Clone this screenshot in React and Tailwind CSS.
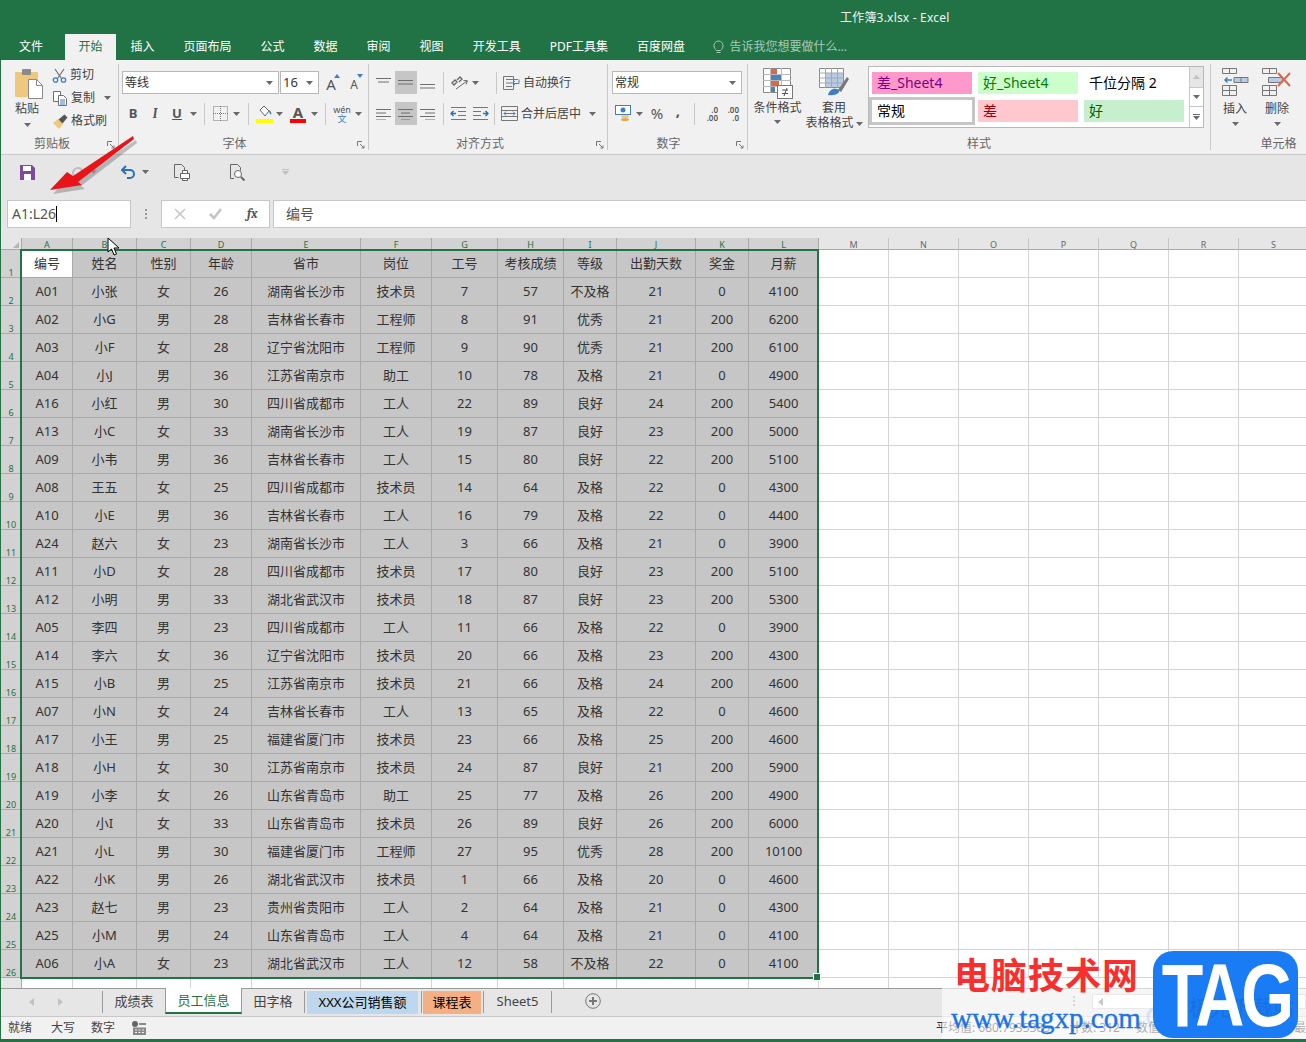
import React from 'react';

const cols = ['A', 'B', 'C', 'D', 'E', 'F', 'G', 'H', 'I', 'J', 'K', 'L', 'M', 'N', 'O', 'P', 'Q', 'R', 'S'];
const head = ['编号', '姓名', '性别', '年龄', '省市', '岗位', '工号', '考核成绩', '等级', '出勤天数', '奖金', '月薪'];
const rows = [
  'A01 小张 女 26 湖南省长沙市 技术员 7 57 不及格 21 0 4100',
  'A02 小G 男 28 吉林省长春市 工程师 8 91 优秀 21 200 6200',
  'A03 小F 女 28 辽宁省沈阳市 工程师 9 90 优秀 21 200 6100',
  'A04 小J 男 36 江苏省南京市 助工 10 78 及格 21 0 4900',
  'A16 小红 男 30 四川省成都市 工人 22 89 良好 24 200 5400',
  'A13 小C 女 33 湖南省长沙市 工人 19 87 良好 23 200 5000',
  'A09 小韦 男 36 吉林省长春市 工人 15 80 良好 22 200 5100',
  'A08 王五 女 25 四川省成都市 技术员 14 64 及格 22 0 4300',
  'A10 小E 男 36 吉林省长春市 工人 16 79 及格 22 0 4400',
  'A24 赵六 女 23 湖南省长沙市 工人 3 66 及格 21 0 3900',
  'A11 小D 女 28 四川省成都市 技术员 17 80 良好 23 200 5100',
  'A12 小明 男 33 湖北省武汉市 技术员 18 87 良好 23 200 5300',
  'A05 李四 男 23 四川省成都市 工人 11 66 及格 22 0 3900',
  'A14 李六 女 36 辽宁省沈阳市 技术员 20 66 及格 23 200 4300',
  'A15 小B 男 25 江苏省南京市 技术员 21 66 及格 24 200 4600',
  'A07 小N 女 24 吉林省长春市 工人 13 65 及格 22 0 4600',
  'A17 小王 男 25 福建省厦门市 技术员 23 66 及格 25 200 4600',
  'A18 小H 女 30 江苏省南京市 技术员 24 87 良好 21 200 5900',
  'A19 小李 女 26 山东省青岛市 助工 25 77 及格 26 200 4900',
  'A20 小I 女 33 山东省青岛市 技术员 26 89 良好 26 200 6000',
  'A21 小L 男 30 福建省厦门市 工程师 27 95 优秀 28 200 10100',
  'A22 小K 男 26 湖北省武汉市 技术员 1 66 及格 20 0 4600',
  'A23 赵七 男 23 贵州省贵阳市 工人 2 64 及格 21 0 4300',
  'A25 小M 男 24 山东省青岛市 工人 4 64 及格 21 0 4100',
  'A06 小A 女 23 湖北省武汉市 工人 12 58 不及格 22 0 4100',
].map((r) => r.split(' '));

const tabs = ['插入', '页面布局', '公式', '数据', '审阅', '视图', '开发工具', 'PDF工具集', '百度网盘'];
const gridCols = 'grid grid-cols-[21px_51px_64px_54px_61px_109px_71px_66px_66px_53px_79px_53px_70px_70px_70px_70px_70px_70px_70px_70px]';

const Caret = ({ className = '' }) => (
  <svg width="7" height="4" viewBox="0 0 7 4" className={`shrink-0 ${className}`}><path d="M0 0h7L3.5 4z" fill="#6a6a6a" /></svg>
);

const Launcher = () => (
  <svg width="8" height="8" viewBox="0 0 8 8" className="absolute right-[3px] bottom-[1px]" fill="none" stroke="#777">
    <path d="M.5 5V.5H5M3 3l4 4M7 4.5V7H4.5" />
  </svg>
);

const Lines = ({ widths, y = 0 }) => (
  <svg width="16" height="12" viewBox="0 0 16 12" stroke="#6e6e6e">
    {widths.map(([x1, x2], i) => <path key={i} d={`M${x1} ${y + 1.5 + i * 3.5}H${x2}`} />)}
  </svg>
);

const Group = ({ w, label, labelCls = '', launcher, children, border = true }) => (
  <div className={`relative flex flex-col shrink-0 h-[86px] ${w} ${border ? 'border-r border-[#c8c8c8]' : ''}`}>
    <div className="h-[74px] shrink-0">{children}</div>
    <div className={`text-center text-[12px] leading-[12px] text-[#666] ${labelCls}`}>{label}</div>
    {launcher && <Launcher />}
  </div>
);

const Sep = ({ className = '' }) => <div className={`w-px h-[22px] bg-[#c8c8c8] shrink-0 ${className}`} />;

const Select = ({ w, text, size = 'text-[12px]' }) => (
  <div className={`${w} h-[23px] shrink-0 bg-white border border-[#b8b8b8] flex items-center justify-between pl-[2px] pr-[5px] text-[#333] ${size}`}>
    <span>{text}</span>
    <Caret />
  </div>
);

const PasteIcon = () => (
  <svg width="30" height="31" viewBox="0 0 30 31" className="ml-[4px]">
    <rect x="1" y="4" width="23" height="25" rx="1" fill="#edc87e" />
    <rect x="8" y="1" width="9" height="6" rx="1" fill="#8a8a8a" />
    <path d="M14.5 11.5h8l6 6v13h-14z" fill="#fff" stroke="#8a8a8a" />
    <path d="M22.5 11.5v6h6" fill="none" stroke="#8a8a8a" />
  </svg>
);

const Scissors = () => (
  <svg width="15" height="15" viewBox="0 0 15 15" fill="none" strokeWidth="1.3">
    <circle cx="3.5" cy="12" r="2.2" stroke="#3f7fbf" />
    <circle cx="11.5" cy="12" r="2.2" stroke="#3f7fbf" />
    <path d="M3 1l6.5 9.5M12 1L5.5 10.5" stroke="#777" />
  </svg>
);

const CopyIcon = () => (
  <svg width="16" height="15" viewBox="0 0 16 15" fill="#fff" stroke="#6f6f6f">
    <path d="M1.5.5h7v10h-7z" />
    <path d="M6.5 4.5h5l3 3v7h-8z" />
    <path d="M8 9h5M8 11h5M8 13h5" stroke="#3f7fbf" />
  </svg>
);

const BrushIcon = () => (
  <svg width="16" height="15" viewBox="0 0 16 15">
    <path d="M1 9l5-4 5 5-4 5z" fill="#edc87e" />
    <path d="M6.5 5.5l6-5 3 3-5 6z" fill="#555" />
  </svg>
);

const GrowA = ({ up }) => (
  <div className="relative w-[20px] h-[20px] flex items-end justify-center text-[#555]">
    <span className={up ? 'text-[15px] leading-[18px]' : 'text-[12px] leading-[16px]'}>A</span>
    <svg width="6" height="4" viewBox="0 0 6 4" className="absolute right-[1px] top-[1px]">
      <path d={up ? 'M0 4h6L3 0z' : 'M0 0h6L3 4z'} fill="#3f7fbf" />
    </svg>
  </div>
);

const BorderIcon = () => (
  <svg width="15" height="15" viewBox="0 0 15 15" stroke="#777" fill="none" strokeDasharray="1 1">
    <path d="M.5.5h14v14H.5zM7.5 0v15M0 7.5h15" />
  </svg>
);

const FillIcon = () => (
  <svg width="17" height="19" viewBox="0 0 17 19">
    <path d="M4 6l4-4 5 5-4 5z" fill="#fff" stroke="#666" />
    <path d="M13 6c2 1 3 3 2 5-1-1-2-3-2-5z" fill="#3f7fbf" />
    <rect y="15" width="17" height="4" fill="#ffff00" />
  </svg>
);

const WrapIcon = () => (
  <svg width="17" height="16" viewBox="0 0 17 16" fill="none">
    <path d="M.5 1.5h10v13H.5z" stroke="#777" />
    <path d="M3 4.5h12M3 8h6M3 11.5h6" stroke="#777" />
    <path d="M16 4.5v4h-6M12 6l-2.500 2 2.500 2" stroke="#3f7fbf" />
  </svg>
);

const MergeIcon = () => (
  <svg width="17" height="15" viewBox="0 0 17 15" fill="none">
    <path d="M.5.5h16v14H.5zM.5 4.500h16M.5 10.500h16" stroke="#777" />
    <path d="M3 7.500h11M5 5.500l-2 2 2 2M12 5.500l2 2-2 2" stroke="#3f7fbf" />
  </svg>
);

const IndentIcon = ({ flip }) => (
  <svg width="17" height="13" viewBox="0 0 17 13" fill="none" className={flip ? '-scale-x-100' : ''}>
    <path d="M1 .5h15M8 4.500h8M8 8.500h8M1 12.500h15" stroke="#777" />
    <path d="M6 6.500H1M3.500 4L1 6.500 3.500 9" stroke="#2f6fb5" strokeWidth="1.500" />
  </svg>
);

const OrientIcon = () => (
  <svg width="18" height="16" viewBox="0 0 18 16" fill="none" stroke="#666">
    <path d="M1 8l3-3 2 2-3 3zM6 5l3-3 2 2-3 3" strokeWidth="1.300" />
    <path d="M5 14L16 6M12.500 5.500L16.500 5.800 15 9.500" />
  </svg>
);

const CurrencyIcon = () => (
  <svg width="17" height="17" viewBox="0 0 17 17">
    <rect x=".5" y=".5" width="15" height="9" fill="#fff" stroke="#3f7fbf" />
    <circle cx="8" cy="5" r="2.500" fill="#3f7fbf" />
    <ellipse cx="10" cy="11.500" rx="4" ry="1.500" fill="#edc87e" />
    <ellipse cx="10" cy="14.500" rx="4" ry="1.500" fill="#e0a94f" />
  </svg>
);

const CondIcon = () => (
  <svg width="30" height="31" viewBox="0 0 30 31" fill="none">
    <path d="M.5.5h27v24H.5z" fill="#fff" stroke="#8a8a8a" />
    <path d="M7.500 0v25M18.500 0v25M0 6.500h28M0 12.500h28M0 18.500h28" stroke="#b8b8b8" />
    <rect x="8" y="1" width="6" height="5" fill="#d9694b" />
    <rect x="8" y="7" width="10" height="5" fill="#4a82bd" />
    <rect x="8" y="13" width="8" height="5" fill="#d9694b" />
    <rect x="8" y="19" width="4" height="5" fill="#4a82bd" />
    <rect x="14.500" y="17.500" width="15" height="13" fill="#fff" stroke="#777" />
    <path d="M19 22h6M19 25.500h6M24 20l-3 8" stroke="#555" />
  </svg>
);

const TableIcon = () => (
  <svg width="30" height="31" viewBox="0 0 30 31" fill="none">
    <path d="M.5.5h24v19H.5z" fill="#fff" stroke="#8a8a8a" />
    <rect x="7" y="5" width="17" height="14" fill="#b7cbe6" />
    <path d="M6.500 0v20M12.500 0v20M18.500 0v20M0 5h25M0 10h25M0 15h25" stroke="#a8a8a8" />
    <path d="M19 22l9-13 2 2-8 13z" fill="#777" />
    <path d="M9 27c1-5 6-8 11-5 1 3-3 6-11 5z" fill="#3f7fbf" />
  </svg>
);

const InsertIcon = () => (
  <svg width="27" height="28" viewBox="0 0 27 28" fill="none" stroke="#777">
    <path d="M.5.5h14v5H.5zM7.500 0v6" />
    <path d="M12 9.500h14v5H12zM19 9v6" fill="#b7cbe6" />
    <path d="M.5 17.500h14v10H.5zM7.500 17v11M0 22.500h15" />
    <path d="M10 12H3M5.500 9.500L3 12l2.500 2.500" stroke="#3f7fbf" strokeWidth="1.500" />
  </svg>
);

const DeleteIcon = () => (
  <svg width="30" height="28" viewBox="0 0 30 28" fill="none" stroke="#777">
    <path d="M.5.500h14v5H.5zM7.500 0v6" />
    <path d="M6.500 9.500h14v5h-14z" fill="#b7cbe6" />
    <path d="M.5 17.500h14v10H.5zM7.500 17v11M0 22.500h15" />
    <path d="M16 5l12 13M28 5L16 18" stroke="#d9694b" strokeWidth="2" />
  </svg>
);

const Style = ({ cls, children }) => (
  <div className={`w-[100px] h-[22px] flex items-center pl-[5px] pb-px text-[14px] ${cls}`}>{children}</div>
);

function Ribbon() {
  return (
    <div className="flex h-[94px] bg-[#f1f1f1] pt-[4px] pl-[5px]">
      <Group w="w-[113px]" label="剪贴板" labelCls="pr-[20px]" launcher>
        <div className="flex">
          <div className="w-[42px] flex flex-col items-center pt-[4px] text-[12px] text-[#444]">
            <PasteIcon />
            <span className="leading-[16px] mt-[2px]">粘贴</span>
            <Caret className="mt-[6px]" />
          </div>
          <div className="flex flex-col gap-[7px] pt-[3px] pl-[4px] text-[12px] text-[#444] leading-[16px]">
            <div className="flex items-center gap-[3px]"><Scissors />剪切</div>
            <div className="flex items-center gap-[3px]"><CopyIcon />复制<Caret className="ml-[6px]" /></div>
            <div className="flex items-center gap-[3px]"><BrushIcon />格式刷</div>
          </div>
        </div>
      </Group>
      <Group w="w-[250px]" label="字体" labelCls="pr-[18px]" launcher>
        <div className="pl-[3px] pt-[7px]">
          <div className="flex items-center">
            <Select w="w-[157px]" text="等线" />
            <Select w="w-[39px] ml-px" text="16" size="text-[13px]" />
            <div className="ml-[2px] flex gap-[3px]"><GrowA up /><GrowA /></div>
          </div>
          <div className="flex items-center h-[23px] mt-[8px] text-[13px] text-[#555]">
            <span className="w-[20px] shrink-0 ml-[1px] text-center font-bold">B</span>
            <span className="w-[24px] shrink-0 text-center italic font-serif font-bold">I</span>
            <span className="w-[20px] shrink-0 text-center font-bold underline">U</span>
            <Caret className="ml-[3px]" />
            <Sep className="ml-[7px]" />
            <div className="ml-[8px]"><BorderIcon /></div>
            <Caret className="ml-[5px]" />
            <Sep className="ml-[8px]" />
            <div className="ml-[7px]"><FillIcon /></div>
            <Caret className="ml-[3px]" />
            <div className="ml-[7px] w-[16px] flex flex-col items-center leading-[14px] font-bold text-[15px]">
              <span>A</span><span className="w-[16px] h-[4px] bg-[#ff0000]" />
            </div>
            <Caret className="ml-[5px]" />
            <Sep className="ml-[7px]" />
            <div className="ml-[8px] w-[16px] flex flex-col items-center text-[9px] leading-[9px]">
              <span>wén</span><span className="text-[#3f7fbf]">文</span>
            </div>
            <Caret className="ml-[5px]" />
          </div>
        </div>
      </Group>
      <Group w="w-[239px]" label="对齐方式" labelCls="pr-[16px]" launcher>
        <div className="pl-[4px] pt-[7px]">
          <div className="flex items-center h-[23px]">
            <div className="w-[22px] flex justify-center"><Lines widths={[[0, 15], [2, 13]]} /></div>
            <div className="w-[22px] h-[23px] bg-[#c6c6c6] flex justify-center items-center"><Lines widths={[[0, 15], [0, 15]]} y={2} /></div>
            <div className="w-[22px] flex justify-center pt-[6px]"><Lines widths={[[0, 15], [0, 15]]} y={3} /></div>
            <Sep className="ml-[4px]" />
            <div className="ml-[7px]"><OrientIcon /></div>
            <Caret className="ml-[3px]" />
            <Sep className="ml-[17px]" />
            <div className="ml-[6px] flex items-center gap-[3px] text-[12px] text-[#444]"><WrapIcon />自动换行</div>
          </div>
          <div className="flex items-center h-[23px] mt-[8px]">
            <div className="w-[22px] flex justify-center"><Lines widths={[[0, 15], [0, 10], [0, 15], [0, 10]]} /></div>
            <div className="w-[22px] h-[23px] bg-[#c6c6c6] flex justify-center items-center"><Lines widths={[[0, 15], [3, 12], [0, 15], [3, 12]]} /></div>
            <div className="w-[22px] flex justify-center"><Lines widths={[[0, 15], [5, 15], [0, 15], [5, 15]]} /></div>
            <Sep className="ml-[4px]" />
            <div className="ml-[6px]"><IndentIcon /></div>
            <div className="ml-[5px]"><IndentIcon flip /></div>
            <Sep className="ml-[5px]" />
            <div className="ml-[6px] flex items-center gap-[3px] text-[12px] text-[#444]"><MergeIcon />合并后居中</div>
            <Caret className="ml-[8px]" />
          </div>
        </div>
      </Group>
      <Group w="w-[140px]" label="数字" labelCls="pr-[18px]" launcher>
        <div className="pl-[4px] pt-[7px]">
          <Select w="w-[130px]" text="常规" />
          <div className="flex items-center h-[23px] mt-[8px] text-[#555]">
            <div className="ml-[3px]"><CurrencyIcon /></div>
            <Caret className="ml-[4px]" />
            <span className="ml-[5px] w-[18px] text-center text-[15px]">%</span>
            <span className="ml-[3px] -mt-[8px] w-[18px] text-center font-bold text-[15px] leading-[14px]">,</span>
            <Sep className="ml-[7px]" />
            <div className="ml-[9px] w-[14px] text-[8px] leading-[8px] text-right font-semibold">.0<br />.00</div>
            <div className="ml-[7px] w-[14px] text-[8px] leading-[8px] text-right font-semibold">.00<br />.0</div>
          </div>
        </div>
      </Group>
      <Group w="w-[463px]" label="样式">
        <div className="flex">
          <div className="w-[59px] flex flex-col items-center pt-[4px] text-[12px] text-[#444] leading-[15px]">
            <CondIcon />
            <span className="mt-[1px]">条件格式</span>
            <Caret className="mt-[5px]" />
          </div>
          <div className="w-[54px] flex flex-col items-center pt-[4px] text-[12px] text-[#444] leading-[15px]">
            <TableIcon />
            <span className="mt-[1px]">套用</span>
            <span className="whitespace-nowrap">表格格式<Caret className="inline ml-[2px] align-middle" /></span>
          </div>
          <div className="ml-[7px] mt-[2px] w-[336px] h-[62px] bg-white border border-[#b8b8b8] flex">
            <div className="flex-1 flex flex-col">
              <div className="flex gap-[6px] pl-[3px] pt-[5px]">
                <Style cls="bg-[#ff99cc] text-[#800080]">差_Sheet4</Style>
                <Style cls="bg-[#ccffcc] text-[#008000]">好_Sheet4</Style>
                <Style cls="text-black">千位分隔 2</Style>
              </div>
              <div className="flex gap-[6px] pl-[3px] pt-[6px]">
                <div className="w-[106px] h-[28px] -ml-[3px] -mt-[3px] -mr-[3px] border-[3px] border-[#c6c6c6] flex items-center pl-[5px] pb-px text-[14px]">常规</div>
                <Style cls="bg-[#ffc7ce] text-[#9c0006]">差</Style>
                <Style cls="bg-[#c6efce] text-[#006100]">好</Style>
              </div>
            </div>
            <div className="w-[14px] border-l border-[#c8c8c8] flex flex-col items-center">
              <div className="h-[21px] w-full bg-[#e6e6e6] flex items-center justify-center border-b border-[#c8c8c8]"><svg width="7" height="4" viewBox="0 0 7 4"><path d="M0 4h7L3.500 0z" fill="#c0c0c0" /></svg></div>
              <div className="h-[19px] w-full flex items-center justify-center border-b border-[#c8c8c8]"><Caret /></div>
              <div className="flex-1 flex flex-col items-center justify-center gap-px"><span className="w-[7px] h-px bg-[#6a6a6a]" /><Caret /></div>
            </div>
          </div>
        </div>
      </Group>
      <Group w="w-[95px]" label="单元格" labelCls="pl-[40px] whitespace-nowrap" border={false}>
        <div className="flex pl-[3px]">
          <div className="w-[42px] flex flex-col items-center pt-[4px] text-[12px] text-[#444] leading-[15px]">
            <InsertIcon />
            <span className="mt-[5px]">插入</span>
            <Caret className="mt-[6px]" />
          </div>
          <div className="w-[42px] flex flex-col items-center pt-[4px] text-[12px] text-[#444] leading-[15px]">
            <DeleteIcon />
            <span className="mt-[5px]">删除</span>
            <Caret className="mt-[6px]" />
          </div>
        </div>
      </Group>
    </div>
  );
}

function QuickBar() {
  return (
    <div className="h-[46px] bg-[#e6e6e6] border-t border-[#c8c8c8] flex items-center pl-[19px] pb-[11px]">
      <svg width="15" height="15" viewBox="0 0 15 15">
        <path d="M0 0h12l3 3v12H0z" fill="#7f4a9e" />
        <rect x="3" y="1" width="8" height="5" fill="#fff" />
        <rect x="4" y="9" width="7" height="6" fill="#fff" />
      </svg>
      <svg width="18" height="15" viewBox="0 0 18 15" fill="none" stroke="#bdbdbd" strokeWidth="2" className="ml-[34px]">
        <path d="M14 8a5 5 0 1 0-2 4M16 3v5h-5" />
      </svg>
      <Caret className="ml-[3px] opacity-40" />
      <svg width="15" height="14" viewBox="0 0 15 14" fill="none" stroke="#2f6fb5" strokeWidth="2" className="ml-[24px]">
        <path d="M1 5h8a4 4 0 0 1 0 8H6M5 1L1 5l4 4" />
      </svg>
      <Caret className="ml-[6px]" />
      <svg width="17" height="17" viewBox="0 0 17 17" fill="none" stroke="#666" className="ml-[25px]">
        <path d="M.5.5h7l3 3v3M.5.5v13h4" />
        <path d="M6.500 9.500h9v5h-9zM8.500 9V6.500h5V9M8.500 14v2.500h5V14" fill="#fff" />
      </svg>
      <svg width="17" height="17" viewBox="0 0 17 17" fill="none" stroke="#666" className="ml-[38px]">
        <path d="M5 14.500H1.500V.5h7l3 3v3" />
        <circle cx="9" cy="10" r="3.500" fill="#fff" />
        <path d="M12 13l3.500 3.500" strokeWidth="2" />
      </svg>
      <span className="ml-[36px] flex flex-col items-center gap-px opacity-30"><span className="w-[7px] h-px bg-[#6a6a6a]" /><Caret /></span>
    </div>
  );
}

function FormulaBar() {
  return (
    <div className="h-[28px] bg-[#e6e6e6] flex">
      <div className="ml-[6px] w-[124px] bg-white border border-[#c6c6c6] flex items-center pl-[4px] pb-px text-[14px] text-[#555]">
        A1:L26<span className="w-px h-[16px] bg-black" />
      </div>
      <div className="w-[30px] flex flex-col items-center justify-center gap-[2px]">
        <span className="w-[2px] h-[2px] bg-[#999]" /><span className="w-[2px] h-[2px] bg-[#999]" /><span className="w-[2px] h-[2px] bg-[#999]" />
      </div>
      <div className="w-[109px] bg-white border border-[#c6c6c6] flex items-center">
        <svg width="12" height="12" viewBox="0 0 12 12" stroke="#c4c4c4" strokeWidth="1.500" className="ml-[12px]"><path d="M1 1l10 10M11 1L1 11" /></svg>
        <svg width="13" height="12" viewBox="0 0 13 12" fill="none" stroke="#c4c4c4" strokeWidth="2.500" className="ml-[23px]"><path d="M1 6l4 4 7-9" /></svg>
        <span className="ml-[25px] font-serif italic font-bold text-[13px] text-[#555]">fx</span>
      </div>
      <div className="ml-[3px] flex-1 bg-white border-y border-l border-[#c6c6c6] flex items-center pl-[12px] pb-px text-[14px] text-[#555]">编号</div>
    </div>
  );
}

function Sheet() {
  return (
    <div className="relative flex-1 overflow-hidden bg-white">
      <div className={gridCols}>
        <div className="h-[12px] bg-[#e6e6e6] border-r border-b border-[#aaa] relative overflow-hidden">
          <svg width="6" height="6" viewBox="0 0 6 6" className="absolute right-[2px] bottom-[1px]"><path d="M6 0v6H0z" fill="#b4b4b4" /></svg>
        </div>
        {cols.map((c, i) => (
          <div
            key={c}
            className={`h-[12px] overflow-hidden text-center text-[9px] leading-[14px] border-r ${i < 12 ? 'bg-[#d2d2d2] text-[#217346] border-[#aaa] border-b' : 'bg-[#e6e6e6] text-[#666] border-[#c4c4c4] border-b border-b-[#aaa]'}`}
          >
            {c}
          </div>
        ))}
        {[head, ...rows].map((row, r) => (
          <React.Fragment key={r}>
            <div className="h-[28px] bg-[#d2d2d2] border-r border-b border-[#aaa] text-center text-[9px] leading-[8px] text-[#217346] flex items-end justify-center">{r + 1}</div>
            {cols.map((c, i) => {
              if (i >= 12) return <div key={c} className="h-[28px] border-r border-b border-[#d4d4d4]" />;
              const first = r === 0 && i === 0;
              return (
                <div
                  key={c}
                  className={`h-[28px] pt-px flex items-center justify-center text-[13px] text-[#333] border-r border-b border-[#a8a8a8] whitespace-nowrap ${first ? 'bg-white' : 'bg-[#c6c6c6]'}`}
                >
                  {row[i]}
                </div>
              );
            })}
          </React.Fragment>
        ))}
        <div className="h-[12px] bg-[#e6e6e6] border-r border-[#aaa]" />
        {cols.map((c) => <div key={c} className="h-[12px] border-r border-[#d4d4d4]" />)}
      </div>
      {/* selection box */}
      <div className="absolute left-[19px] top-[11px] w-[799px] h-[730px] border-2 border-[#217346] pointer-events-none">
        <span className="absolute -right-[4px] -bottom-[4px] w-[6px] h-[6px] bg-[#217346] border border-white box-content" />
      </div>
    </div>
  );
}

function SheetTabs() {
  const sep = 'w-px h-[22px] bg-[#9a9a9a] shrink-0';
  return (
    <div className="h-[28px] bg-[#e6e6e6] border-t border-[#9a9a9a] flex items-start text-[13px] text-[#444]">
      <svg width="5" height="8" viewBox="0 0 5 8" className="ml-[28px] mt-[9px]"><path d="M5 0v8L0 4z" fill="#c0c0c0" /></svg>
      <svg width="5" height="8" viewBox="0 0 5 8" className="ml-[24px] mt-[9px]"><path d="M0 0v8l5-4z" fill="#c0c0c0" /></svg>
      <div className={`${sep} ml-[39px] mt-[2px]`} />
      <div className="w-[62px] h-[25px] flex items-center justify-center">成绩表</div>
      <div className="w-[77px] h-[26px] -mt-px pt-px bg-white border-b-2 border-[#217346] border-x border-x-[#9a9a9a] text-[#217346] flex items-center justify-center">员工信息</div>
      <div className="w-[62px] h-[25px] flex items-center justify-center">田字格</div>
      <div className={`${sep} mt-[2px]`} />
      <div className="ml-[2px] mt-[2px] w-[111px] h-[23px] bg-[#bdd7ee] text-black flex items-center justify-center">XXX公司销售额</div>
      <div className={`${sep} ml-[3px] mt-[2px]`} />
      <div className="ml-[1px] mt-[2px] w-[58px] h-[23px] bg-[#f4b084] text-black flex items-center justify-center">课程表</div>
      <div className={`${sep} ml-[2px] mt-[2px]`} />
      <div className="w-[67px] h-[25px] flex items-center justify-center">Sheet5</div>
      <div className={`${sep} mt-[2px]`} />
      <svg width="16" height="16" viewBox="0 0 16 16" fill="none" stroke="#777" className="ml-[33px] mt-[4px]">
        <circle cx="8" cy="8" r="7.300" />
        <path d="M8 4v8M4 8h8" strokeWidth="2" />
      </svg>
      <div className="ml-auto mt-[7px] flex flex-col gap-[2px]">
        <span className="w-[2px] h-[2px] bg-[#999]" /><span className="w-[2px] h-[2px] bg-[#999]" /><span className="w-[2px] h-[2px] bg-[#999]" />
      </div>
      <div className="ml-[17px] mt-[5px] w-[214px] h-[15px] bg-white border border-[#c8c8c8] flex items-center pl-[5px]">
        <svg width="5" height="8" viewBox="0 0 5 8"><path d="M5 0v8L0 4z" fill="#777" /></svg>
      </div>
    </div>
  );
}

function StatusBar() {
  return (
    <div className="h-[23px] bg-[#f1f1f1] border-t border-[#c8c8c8] flex items-center pl-[7px] text-[12px] text-[#444] whitespace-nowrap overflow-hidden">
      <span>就绪</span>
      <span className="ml-[19px]">大写</span>
      <span className="ml-[16px]">数字</span>
      <svg width="14" height="14" viewBox="0 0 14 14" className="ml-[17px]" fill="#888">
        <circle cx="3" cy="3" r="3" fill="#666" />
        <path d="M7 2h7v2H7zM1 6.500h13V14H1z" />
        <path d="M3 8.500h2v1H3zM6.500 8.500h2v1h-2zM10 8.500h2v1h-2zM3 11h2v1H3zM6.500 11h2v1h-2zM10 11h2v1h-2z" fill="#f1f1f1" />
      </svg>
      <div className="ml-auto flex text-[#333]">
        <span className="w-[133px]">平均值: 680.7935385</span>
        <span className="w-[67px]">计数: 312</span>
        <span className="w-[93px]">数值计数: 150</span>
        <span className="w-[65px]">最小值: 0</span>
        <span className="w-[12px] overflow-hidden">最</span>
      </div>
    </div>
  );
}

export default function App() {
  return (
    <div className="relative w-[1306px] h-[1042px] overflow-hidden bg-[#217346] font-['Noto_Sans','Noto_Sans_CJK_SC',sans-serif]">
      <div className="ml-px h-[1039px] flex flex-col">
        {/* title + tabs */}
        <div className="h-[60px] bg-[#217346] shrink-0 flex flex-col text-white">
          <div className="h-[34px] pl-[839px] pt-[9px] text-[12px] tracking-[0.2px] leading-[17px] text-[#f3f3f3]">工作簿3.xlsx - Excel</div>
          <div className="h-[26px] flex items-stretch text-[12px] pl-[4px]">
            <div className="pl-[14px] pr-[22px] flex items-center">文件</div>
            <div className="px-[13.500px] bg-[#f1f1f1] text-[#217346] flex items-center">开始</div>
            {tabs.map((t) => <div key={t} className="px-[14.500px] flex items-center">{t}</div>)}
            <div className="pl-[14px] flex items-center gap-[5px] text-[#a9c9b6]">
              <svg width="11" height="14" viewBox="0 0 11 14" fill="none" stroke="#a9c9b6"><path d="M3.500 10.500C2 9 1 8 1 5.500a4.500 4.500 0 0 1 9 0C10 8 9 9 7.500 10.500zM3.500 12.500h4" /></svg>
              告诉我您想要做什么...
            </div>
          </div>
        </div>
        <Ribbon />
        <QuickBar />
        <FormulaBar />
        <div className="h-[10px] bg-[#e6e6e6] shrink-0" />
        <Sheet />
        <SheetTabs />
        <StatusBar />
      </div>

      {/* red annotation arrow */}
      <svg width="100" height="70" viewBox="0 0 100 70" className="absolute left-[45px] top-[130px]">
        <path d="M5 60l17-18 6 4 60-40 1 3-56 43 4 3z" fill="#000" opacity=".22" transform="translate(3 4)" />
        <path d="M5 60l17-18 6 4 60-40 1 3-56 43 4 3z" fill="#e8141a" />
      </svg>
      {/* mouse cursor */}
      <svg width="13" height="19" viewBox="0 0 13 19" className="absolute left-[107px] top-[237px]">
        <path d="M1 1v14l3.500-3 2.500 6 2.500-1-2.500-6H12z" fill="#fff" stroke="#000" />
      </svg>

      {/* watermark */}
      <div className="absolute left-[942px] top-[978px] w-[364px] h-[60px] bg-white/60" />
      <svg width="16" height="24" viewBox="0 0 16 24" fill="none" stroke="#1a7cf5" strokeWidth="3" opacity=".15" className="absolute left-[1146px] top-[1005px]">
        <path d="M15 2C6 2 2 7 2 12s4 10 13 10" />
      </svg>
      <div className="absolute left-[954px] top-[949px] text-[36px] leading-[48px] font-bold text-[#f92f2f] tracking-[1px] whitespace-nowrap font-['Noto_Sans_CJK_SC',sans-serif]">电脑技术网</div>
      <div className="absolute left-[951px] top-[1001px] text-[29px] leading-[34px] text-[#1a73e8] [-webkit-text-stroke:0.3px_#1a73e8] whitespace-nowrap font-['Liberation_Serif',serif]">www.tagxp.com</div>
      <div className="absolute left-[1153px] top-[951px] w-[145px] h-[87px] rounded-[20px] bg-[#1a7cf5] flex items-center justify-center overflow-hidden">
        <span className="absolute left-[36px] top-[44px] text-[21px] leading-[24px] text-[#1565c8]/50 whitespace-nowrap">极光下载站</span>
        <span className="relative ml-[2px] text-[68px] font-bold tracking-[-3px] text-white font-['Liberation_Sans',sans-serif] leading-none scale-y-[1.3]">TAG</span>
      </div>
    </div>
  );
}
